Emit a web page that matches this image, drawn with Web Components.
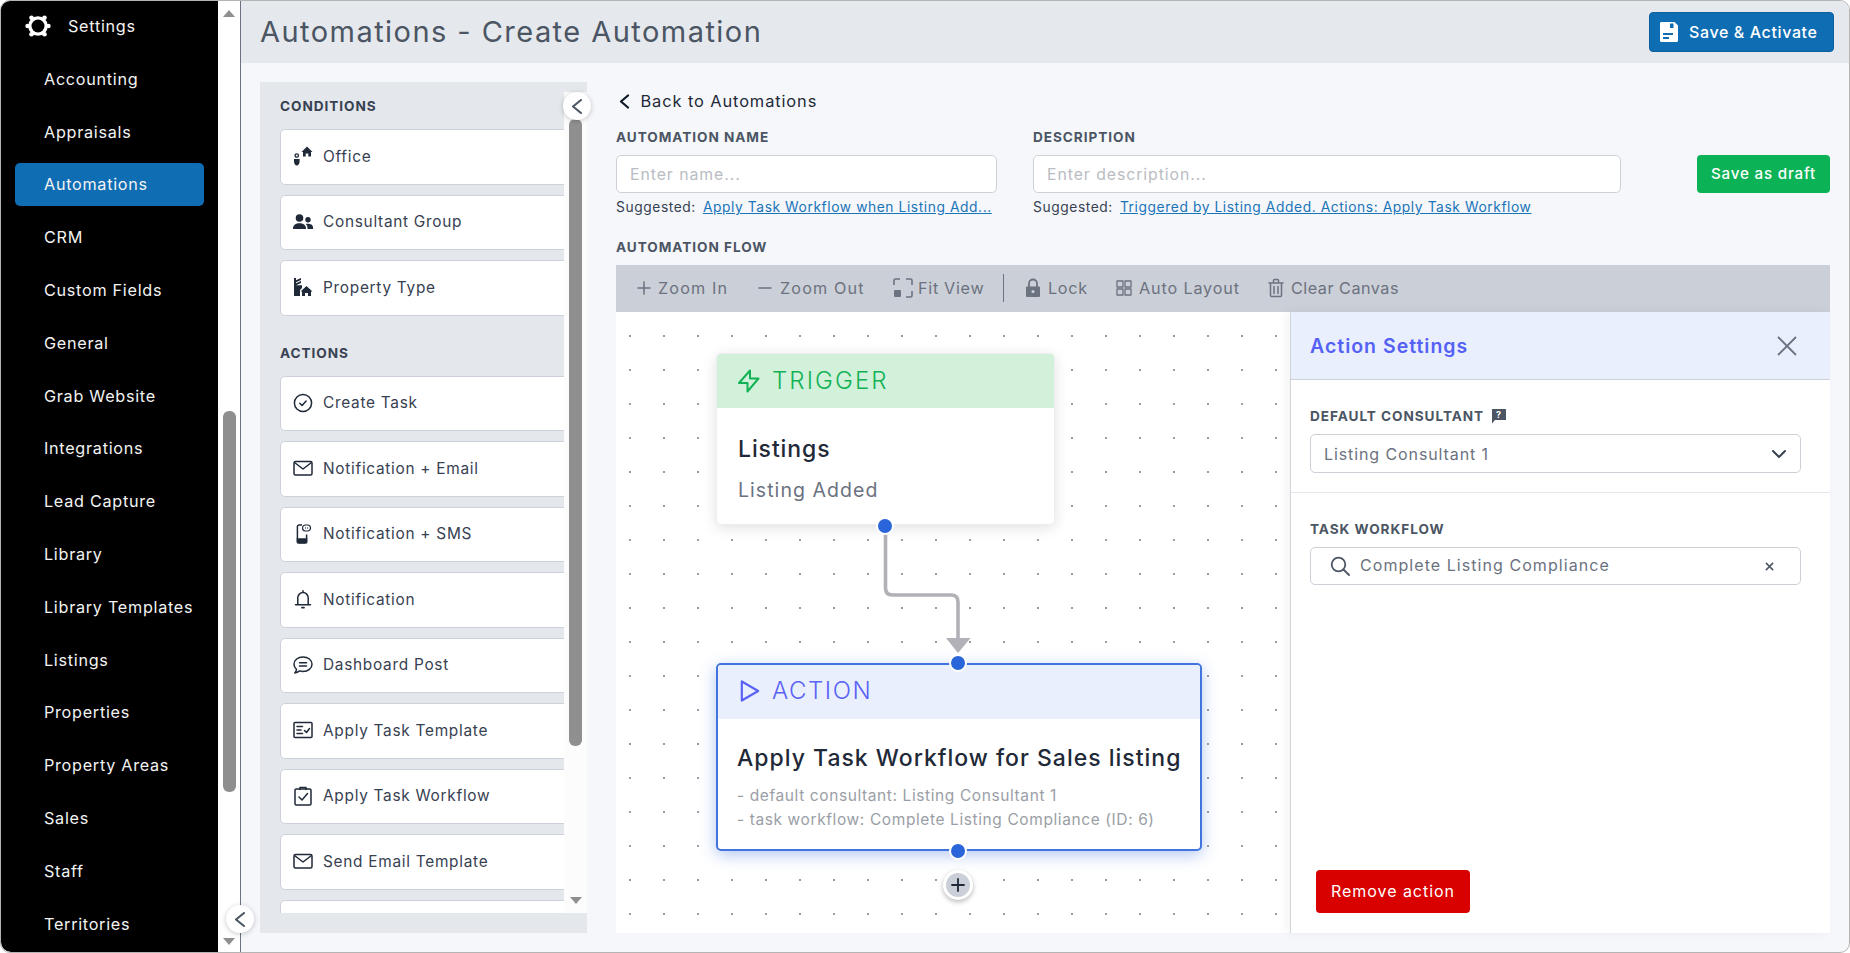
<!DOCTYPE html>
<html><head><meta charset="utf-8"><title>Automations</title>
<style>
html,body{margin:0;padding:0;height:953px;overflow:hidden;background:#fff;font-family:Inter,"Liberation Sans",sans-serif}
</style></head><body>
<app-shell>
  <side-nav slot="nav">
    <nav-head>Settings</nav-head>
    <nav-item>Accounting</nav-item><nav-item>Appraisals</nav-item><nav-item active>Automations</nav-item>
    <nav-item>CRM</nav-item><nav-item>Custom Fields</nav-item><nav-item>General</nav-item>
    <nav-item>Grab Website</nav-item><nav-item>Integrations</nav-item><nav-item>Lead Capture</nav-item>
    <nav-item>Library</nav-item><nav-item>Library Templates</nav-item><nav-item>Listings</nav-item>
    <nav-item>Properties</nav-item><nav-item>Property Areas</nav-item><nav-item>Sales</nav-item>
    <nav-item>Staff</nav-item><nav-item>Territories</nav-item>
  </side-nav>
  <page-header slot="header">Automations - Create Automation</page-header>
  <block-panel slot="panel">
    <block-heading>CONDITIONS</block-heading>
    <block-card><svg slot="icon" viewBox="0 0 20 20" width="20" height="20" fill="#1f2937"><path d="M8.500 6 14 .5l5.500 5.500H18v4.500h-2.700V7.500h-2.600v3H10V6z"/><circle cx="3.800" cy="9.500" r="1.700" fill="none" stroke="#1f2937" stroke-width="1.300"/><path d="M1 13h5.600v2.500c0 1.800-1.200 4-2.800 4S1 17.300 1 15.500z"/></svg>Office</block-card>
    <block-card><svg slot="icon" viewBox="0 0 20 20" width="20" height="20" fill="#1f2937"><circle cx="6.500" cy="6" r="3.800"/><path d="M0 16.500c0-3.600 3-5.300 6.500-5.300s6.500 1.700 6.500 5.300v.5H0z"/><circle cx="15" cy="7.800" r="2.700"/><path d="M14.500 11.800c3 0 5.500 1 5.500 3.600V17h-5.500v-1c0-1.700-.6-3-1.800-3.900.5-.2 1.100-.3 1.800-.3z"/></svg>Consultant Group</block-card>
    <block-card><svg slot="icon" viewBox="0 0 20 20" width="20" height="20" fill="#1f2937"><path d="M1 1h2v2.200L8 1v2L3 5.200v1L8 4v2L3 8.200h6V11l-2 2v6H1z"/><path d="M7.500 14.500 13.500 9l6 5.500H18V19h-3v-3h-3v3H9v-4.500z"/></svg>Property Type</block-card>
    <block-heading second>ACTIONS</block-heading>
    <block-card><svg slot="icon" viewBox="0 0 20 20" width="20" height="20" fill="none" stroke="#1f2937" stroke-width="1.500" stroke-linecap="round" stroke-linejoin="round"><circle cx="10" cy="10" r="8.600"/><path d="m6.800 10.300 2.300 2.200 4-4.500"/></svg>Create Task</block-card>
    <block-card><svg slot="icon" viewBox="0 0 20 20" width="20" height="20" fill="none" stroke="#1f2937" stroke-width="1.500" stroke-linejoin="round"><rect x="1" y="3.500" width="18" height="13.500" rx="1.500"/><path d="m1.500 4.500 8.500 6.500 8.500-6.500"/></svg>Notification + Email</block-card>
    <block-card><svg slot="icon" viewBox="0 0 20 20" width="20" height="20" fill="none" stroke="#1f2937" stroke-width="1.500"><path d="M9 1H6a1.600 1.600 0 0 0-1.600 1.600v14.800A1.600 1.600 0 0 0 6 19h6a1.600 1.600 0 0 0 1.600-1.600V10.500"/><path d="M4.500 15h9v3.500h-9z" fill="#1f2937"/><rect x="9.500" y="1" width="8" height="6" rx="3" stroke-width="1.200"/><path d="M12 4h.8M14.300 4h.8" stroke-width="1.300"/></svg>Notification + SMS</block-card>
    <block-card><svg slot="icon" viewBox="0 0 20 20" width="20" height="20" fill="none" stroke="#1f2937" stroke-width="1.500" stroke-linejoin="round" stroke-linecap="round"><path d="M10 1.800V3M4.800 15.500v-6.700a5.200 5.200 0 0 1 10.400 0v6.700M2.500 15.800h15"/><path d="M9 18.600h2" stroke-width="1.800"/></svg>Notification</block-card>
    <block-card><svg slot="icon" viewBox="0 0 20 20" width="20" height="20" fill="none" stroke="#1f2937" stroke-width="1.500" stroke-linecap="round" stroke-linejoin="round"><path d="M10 2c5 0 9 3 9 7.200s-4 7.200-9 7.200c-1.300 0-2.500-.2-3.500-.5-1.200 1-2.700 1.800-4.700 2 .9-1 1.500-2.200 1.700-3.500C2 13 1 11.200 1 9.200 1 5 5 2 10 2z"/><path d="M6.500 7.800h7M6.500 11h7"/></svg>Dashboard Post</block-card>
    <block-card><svg slot="icon" viewBox="0 0 20 20" width="20" height="20" fill="none" stroke="#1f2937" stroke-width="1.500" stroke-linecap="round" stroke-linejoin="round"><rect x="1" y="2.500" width="18" height="15" rx="1"/><path d="M4 6.500h5.500M4 10h4M4 13.500h5.500M11.500 10.500l2 2 3-4"/></svg>Apply Task Template</block-card>
    <block-card><svg slot="icon" viewBox="0 0 20 20" width="20" height="20" fill="none" stroke="#1f2937" stroke-width="1.500" stroke-linecap="round" stroke-linejoin="round"><rect x="2" y="3" width="16" height="16" rx="1.200"/><path d="M7 3.500V1.500h6v2"/><path d="m6 11 3 3 5.500-6.500"/></svg>Apply Task Workflow</block-card>
    <block-card><svg slot="icon" viewBox="0 0 20 20" width="20" height="20" fill="none" stroke="#1f2937" stroke-width="1.500" stroke-linejoin="round"><rect x="1" y="3.500" width="18" height="13.500" rx="1.500"/><path d="m1.500 4.500 8.500 6.500 8.500-6.500"/></svg>Send Email Template</block-card>
    <block-card></block-card>
  </block-panel>
  <back-link slot="back">Back to Automations</back-link>
  <form-field slot="name" label="AUTOMATION NAME" placeholder="Enter name..." link="Apply Task Workflow when Listing Add..." style="width:381px"></form-field>
  <form-field slot="desc" label="DESCRIPTION" placeholder="Enter description..." link="Triggered by Listing Added. Actions: Apply Task Workflow" style="width:588px"></form-field>
  <draft-button slot="draft">Save as draft</draft-button>
  <flow-label slot="flowlabel">AUTOMATION FLOW</flow-label>
  <flow-toolbar slot="toolbar"></flow-toolbar>
  <flow-canvas slot="canvas"></flow-canvas>
  <settings-panel slot="settings"></settings-panel>
</app-shell>
<script>
const F='font-family:Inter,"Liberation Sans",sans-serif;';
function def(name,html){
  customElements.define(name,class extends HTMLElement{
    connectedCallback(){
      if(this.shadowRoot)return;
      const r=this.attachShadow({mode:'open'});
      r.innerHTML=typeof html==='function'?html(this):html;
    }
  });
}
const chevron=`<svg viewBox="0 0 14 19" width="14" height="19" fill="none" stroke="#4b5563" stroke-width="2.100" stroke-linecap="round" stroke-linejoin="round"><path d="M11 3 3 9.500 11 16"/></svg>`;
def('app-shell',`<style>
:host{display:block;width:1850px;height:953px;box-sizing:border-box;border:1px solid #b4b4b4;border-radius:10px;overflow:hidden;position:relative;background:#f5f7fb;${F}}
.root{display:grid;grid-template-columns:217px 22px 1px 1fr;height:100%}
.nav{background:#000;overflow:hidden;border-radius:0 0 0 10px}
.rail{background:#fff;display:flex;flex-direction:column;align-items:center;position:relative}
.line{background:#6b7280}
.tri{width:0;height:0;border-left:6px solid transparent;border-right:6px solid transparent}
.up{border-bottom:7px solid #8f8f8f;margin-top:9px}
.down{border-top:7px solid #8f8f8f;margin-bottom:7px}
.thumb{width:13px;height:381px;background:#8f8f8f;margin-top:394px;border-radius:6px}
.sp{flex:1}
.collapse{position:absolute;left:8px;top:904px}
.main{display:grid;grid-template-rows:62px 1fr;min-width:0}
.body{display:grid;grid-template-columns:327px 1fr;gap:29px;padding:19px 19px 19px 19px;min-height:0}
.col{display:flex;flex-direction:column;min-width:0;min-height:0}
.row{display:flex;gap:36px;margin-top:7px;height:90px;margin-bottom:20px}
.draft{margin-left:auto;padding-top:28px}
.work{flex:1;display:flex;min-height:0}
.cv{flex:1;min-width:0;position:relative}
</style>
<div class="root">
<div class="nav"><slot name="nav"></slot></div>
<div class="rail"><div class="tri up"></div><div class="thumb"></div><div class="sp"></div><div class="tri down"></div><round-btn class="collapse"></round-btn></div>
<div class="line"></div>
<div class="main"><slot name="header"></slot>
<div class="body"><slot name="panel"></slot>
<div class="col"><slot name="back"></slot>
<div class="row"><slot name="name"></slot><slot name="desc"></slot><div class="draft"><slot name="draft"></slot></div></div>
<slot name="flowlabel"></slot><slot name="toolbar"></slot>
<div class="work"><div class="cv"><slot name="canvas"></slot></div><slot name="settings"></slot></div>
</div></div></div></div>`);
def('round-btn',`<style>:host{display:flex;width:28px;height:28px;border-radius:50%;background:#fff;box-shadow:0 1px 5px rgba(0,0,0,.22);align-items:center;justify-content:center;z-index:5}</style>${chevron}`);
def('side-nav',`<style>:host{display:block;color:#f3f3f3;font-size:16.200px;letter-spacing:.72px}</style><slot></slot>`);
def('nav-head',`<style>:host{display:flex;align-items:center;height:52px;padding:0 0 2px 24px;gap:17px;box-sizing:border-box}</style>
<svg viewBox="0 0 26 26" width="26" height="26"><g fill="#fff"><circle cx="13" cy="13" r="9.800"/><circle cx="6.500" cy="4.800" r="2.300"/><circle cx="19.500" cy="4.800" r="2.300"/><circle cx="6.500" cy="21.200" r="2.300"/><circle cx="19.500" cy="21.200" r="2.300"/><circle cx="2.600" cy="13" r="2.300"/><circle cx="23.400" cy="13" r="2.300"/></g><circle cx="13" cy="13" r="6.500" fill="#000"/></svg><slot></slot>`);
def('nav-item',`<style>:host{display:flex;align-items:center;height:52.800px;box-sizing:border-box;padding:0 0 1px 43px}
:host([active]){margin:4px 14px 5.800px 14px;height:43px;padding-left:29px;background:#0f6db3;border-radius:5px}</style><slot></slot>`);
def('page-header',`<style>:host{display:flex;align-items:center;justify-content:space-between;background:#e5e8ec;padding:0 15px 0 19px;color:#4b5563;font-size:29px;letter-spacing:1.450px}
.t{padding-bottom:2px}
button{all:unset;box-sizing:border-box;display:flex;align-items:center;gap:10px;width:185px;height:40px;padding-left:9px;background:#0f6db3;border:1px solid #0c5f9e;border-radius:4px;color:#fff;font-size:16px;letter-spacing:.62px;font-weight:500;${F}}</style>
<span class="t"><slot></slot></span><button><svg viewBox="0 0 20 22" width="20" height="22"><path fill="#fff" d="M2 1h13.500L19 4.500V19.500a1.500 1.500 0 0 1-1.500 1.500h-15A1.500 1.500 0 0 1 1 19.500V2.500A1.500 1.500 0 0 1 2 1z"/><rect x="11" y="2.500" width="3.500" height="4.500" fill="#0f6db3"/><path d="M4 13h10M4 17h6" stroke="#0f6db3" stroke-width="1.800"/></svg><span>Save &amp; Activate</span></button>`);
def('block-panel',`<style>:host{display:grid;grid-template-columns:304px 23px;background:#e4e7ec;padding-bottom:20px;position:relative;height:851px;box-sizing:border-box}
.scroll{overflow:hidden;padding:14px 0 0 20px;box-sizing:border-box;height:831px}
.track{margin-top:10px;background:#fcfcfc;display:flex;flex-direction:column;align-items:center;height:821px;position:relative}
.thumb{width:13px;height:627px;background:#8f8f8f;border-radius:6px;margin-top:27px}
.sp{flex:1}.down{width:0;height:0;border-left:6px solid transparent;border-right:6px solid transparent;border-top:7px solid #8f8f8f;margin-bottom:9px}
round-btn{position:absolute;left:303px;top:10px}
</style><div class="scroll"><slot></slot></div><div class="track"><div class="thumb"></div><div class="sp"></div><div class="down"></div></div><round-btn></round-btn>`);
def('block-heading',`<style>:host{display:block;height:20px;line-height:20px;font-size:13.600px;font-weight:700;color:#374151;letter-spacing:.95px;margin-bottom:13px}:host([second]){margin-top:27px}</style><slot></slot>`);
def('block-card',`<style>:host{display:flex;align-items:center;gap:10px;width:320px;height:55.500px;margin-bottom:10px;box-sizing:border-box;padding:0 0 1px 12px;background:#fff;border:1px solid #cdd1da;border-radius:5px;font-size:15.400px;letter-spacing:.72px;color:#374151}</style><slot name="icon"></slot><slot></slot>`);
def('back-link',`<style>:host{display:flex;align-items:center;gap:10.500px;height:38px;padding-left:3px;font-size:16.400px;letter-spacing:.9px;color:#1f2937}</style><svg viewBox="0 0 11 15" width="11" height="15" fill="none" stroke="#111827" stroke-width="2.200" stroke-linecap="round" stroke-linejoin="round"><path d="M9 1.500 2 7.500l7 6"/></svg><slot></slot>`);
def('form-field',t=>`<style>:host{display:block}
.l{height:20px;line-height:20px;font-size:13.600px;font-weight:700;letter-spacing:.95px;color:#4b5563}
.i{height:38px;box-sizing:border-box;margin-top:8px;border:1px solid #ccd0d7;border-radius:5px;background:#fff;padding-left:13px;display:flex;align-items:center;font-size:15.800px;letter-spacing:.95px;color:#b9bcc2}
.s{display:flex;margin-top:6px;font-size:13.800px;letter-spacing:.58px;color:#374151;line-height:17px;white-space:nowrap}
.a{margin-left:7px;color:#1a74b8;text-decoration:underline}
</style><div class="l">${t.getAttribute('label')}</div><div class="i">${t.getAttribute('placeholder')}</div><div class="s"><span>Suggested:</span><span class="a">${t.getAttribute('link')}</span></div>`);
def('draft-button',`<style>:host{display:flex;align-items:center;justify-content:center;width:133px;height:38px;box-sizing:border-box;padding-bottom:2px;background:#0cb356;border-radius:4px;color:#fff;font-size:15.200px;letter-spacing:.8px;font-weight:500}</style><slot></slot>`);
def('flow-label',`<style>:host{display:block;height:20px;line-height:20px;font-size:13.600px;font-weight:700;letter-spacing:.95px;color:#4b5563;margin-bottom:8px}</style><slot></slot>`);
const S='fill="none" stroke="#6b7280" stroke-linecap="round" stroke-linejoin="round"';
def('flow-toolbar',`<style>:host{display:flex;align-items:center;height:47px;box-sizing:border-box;padding:0 0 1px 20px;background:#cbcfd7;font-size:16.200px;letter-spacing:.7px;color:#6b7280;white-space:nowrap}
.b{display:flex;align-items:center;gap:7px;flex:none}.sep{width:1px;height:28px;background:#6b7280;flex:none}.z{letter-spacing:1.150px}</style>
<div class="b" style="width:121px;gap:6px"><svg viewBox="0 0 16 16" width="16" height="16" ${S} stroke-width="1.500"><path d="M8 2v12M2 8h12"/></svg><span class="z">Zoom In</span></div>
<div class="b" style="width:136px"><svg viewBox="0 0 16 16" width="16" height="16" ${S} stroke-width="1.500"><path d="M2 8h12"/></svg><span class="z">Zoom Out</span></div>
<div class="b" style="width:110px;gap:5px"><svg viewBox="0 0 20 20" width="20" height="20" fill="#6b7280"><path d="M1 7V2.500A1.500 1.500 0 0 1 2.500 1H7M13 1h4.500A1.500 1.500 0 0 1 19 2.500V7M19 13v4.500a1.500 1.500 0 0 1-1.500 1.500H13" fill="none" stroke="#6b7280" stroke-width="1.600"/><rect x="1" y="12" width="7" height="7" rx="1"/></svg>Fit View</div>
<div class="sep" style="margin-right:21px"></div>
<div class="b" style="width:91px"><svg viewBox="0 0 16 20" width="16" height="20"><path d="M4 9V5.500a4 4 0 0 1 8 0V9" fill="none" stroke="#6b7280" stroke-width="1.800"/><path fill="#6b7280" fill-rule="evenodd" d="M2 8.500h12a1 1 0 0 1 1 1V18a1 1 0 0 1-1 1H2a1 1 0 0 1-1-1V9.500a1 1 0 0 1 1-1zM8 12a1.600 1.600 0 1 0 0 3.200A1.600 1.600 0 0 0 8 12z"/></svg>Lock</div>
<div class="b" style="width:152px"><svg viewBox="0 0 16 16" width="16" height="16" ${S} stroke-width="1.300"><rect x="1" y="1" width="6" height="6"/><rect x="9" y="1" width="6" height="6"/><rect x="1" y="9" width="6" height="6"/><rect x="9" y="9" width="6" height="6"/></svg><span style="letter-spacing:.85px">Auto Layout</span></div>
<div class="b"><svg viewBox="0 0 16 20" width="16" height="20" ${S} stroke-width="1.500"><path d="M1 5h14M5.500 5V2.500a1 1 0 0 1 1-1h3a1 1 0 0 1 1 1V5M2.500 5v12.500a1 1 0 0 0 1 1h9a1 1 0 0 0 1-1V5M6 8.500v7M10 8.500v7"/></svg><span style="letter-spacing:.5px">Clear Canvas</span></div>`);
def('flow-canvas',`<style>:host{display:block;position:absolute;inset:0;overflow:hidden;background-color:#fff;background-image:radial-gradient(circle at 17px 17px,#9b9ba1 0,#9b9ba1 .9px,transparent 1.300px);background-size:34px 34px;background-position:-3px 7px}
svg{position:absolute;left:0;top:0}
flow-node{position:absolute}
.h{position:absolute;width:14px;height:14px;border-radius:50%;background:#2a66d9;border:2.500px solid #fff;margin:-9.500px 0 0 -9.500px;z-index:3}
.plus{position:absolute;left:342px;top:573px;margin:-15px 0 0 -15px;width:24px;height:24px;padding:0;border:3px solid #fff;border-radius:50%;background:#cbcfd7;box-shadow:0 2px 5px rgba(0,0,0,.28);display:flex;align-items:center;justify-content:center;z-index:3}
</style>
<svg width="674" height="621"><path d="M269.500 215V276Q269.500 283 276.500 283H335Q342 283 342 290V328" fill="none" stroke="#b1b1b7" stroke-width="3.600"/><path d="M330 326H354.500L342 341z" fill="#b1b1b7"/></svg>
<flow-node kind="trigger" title="Listings" style="left:100px;top:41px;width:339px;height:172px"><span>Listing Added</span></flow-node>
<flow-node kind="action" title="Apply Task Workflow for Sales listing" style="left:100px;top:351px;width:486px;height:188px"><span>- default consultant: Listing Consultant 1</span><br><span>- task workflow: Complete Listing Compliance (ID: 6)</span></flow-node>
<div class="h" style="left:269.500px;top:214px"></div><div class="h" style="left:342px;top:351px"></div><div class="h" style="left:342px;top:539px"></div>
<div class="plus"><svg style="position:static" viewBox="0 0 16 16" width="16" height="16"><path d="M8 2v12M2 8h12" stroke="#1f2937" stroke-width="1.800" stroke-linecap="round"/></svg></div>`);
def('flow-node',t=>{const a=t.getAttribute('kind')==='action';
 const col=a?'#5a62f6':'#12b254';
 const ic=a?`<svg viewBox="0 0 22 26" width="20" height="24" fill="none" stroke="${col}" stroke-width="2.400" stroke-linejoin="round"><path d="M2 2.500 20 13 2 23.500z"/></svg>`:`<svg viewBox="0 0 24 24" width="24" height="24" fill="none" stroke="${col}" stroke-width="2" stroke-linejoin="round" stroke-linecap="round"><path d="M13 1.500v8h8.500L10.500 22.500v-8.500H2z"/></svg>`;
 return `<style>:host{display:block;box-sizing:border-box;background:#fff;border-radius:5px;${a?'border:2px solid #4274dd;box-shadow:0 4px 16px rgba(66,116,221,.4);':'border:1px solid #eceef1;box-shadow:0 3px 14px rgba(0,0,0,.12);'}overflow:hidden}
.hd{height:54px;box-sizing:border-box;padding-bottom:${a?3:1}px;background:${a?'#e9effc':'#d1f1da'};display:flex;align-items:center;gap:${a?12:11}px;padding-left:${a?22:20}px;color:${col};font-size:24px;font-weight:300;letter-spacing:${a?1.55:2.1}px}
.hd svg{flex:none}
.bd{padding:26px ${a?19:21}px 0}
.t{font-size:23px;line-height:${a?26:30}px;color:#1f2937;font-weight:450;letter-spacing:${a?'1':'.9'}px;white-space:nowrap}
.d{margin-top:${a?13:11}px;font-size:${a?15.500:19.500}px;line-height:${a?24:30}px;color:${a?'#9a9ea6':'#6b7280'};letter-spacing:${a?'.6':'1.05'}px;white-space:nowrap}
</style><div class="hd">${ic}${a?'ACTION':'TRIGGER'}</div><div class="bd"><div class="t">${t.getAttribute('title')}</div><div class="d"><slot></slot></div></div>`});
def('settings-panel',`<style>:host{display:flex;flex-direction:column;width:540px;box-sizing:border-box;background:#fff;border-left:1px solid #d0d4db;box-shadow:-4px 0 10px rgba(0,0,0,.05);position:relative;z-index:2}
.hd{height:68px;box-sizing:border-box;padding:1px 33px 0 19px;background:#e9effc;border-bottom:1px solid #cdd1da;display:flex;align-items:center;justify-content:space-between;color:#5561f5;font-size:19.500px;font-weight:600;letter-spacing:1px}
.sec{padding:26px 29px 19px 19px}.sec+.sec{border-top:1px solid #e5e7eb;padding-top:26px}
.l{display:flex;align-items:center;gap:8px;height:20px;font-size:13.600px;font-weight:700;letter-spacing:.95px;color:#4b5563}
.i{margin-top:8px;height:39px;box-sizing:border-box;border:1px solid #ccd0d7;border-radius:5px;display:flex;align-items:center;padding:0 13px;font-size:16px;letter-spacing:.9px;color:#6b7280;justify-content:space-between}
.left{display:flex;align-items:center;gap:10px}
.left span{padding-bottom:2px;letter-spacing:1.060px}
.sp{flex:1}
.rm{align-self:flex-start;margin:0 0 20px 25px;width:154px;height:43px;box-sizing:border-box;padding-bottom:2px;border-radius:4px;background:#d90000;color:#fff;display:flex;align-items:center;justify-content:center;font-size:16px;letter-spacing:.95px;font-weight:400}
</style>
<div class="hd"><span>Action Settings</span><svg viewBox="0 0 20 20" width="20" height="20"><path d="M1 1l18 18M19 1 1 19" stroke="#6b7280" stroke-width="1.800"/></svg></div>
<div class="sec"><div class="l">DEFAULT CONSULTANT <svg viewBox="0 0 14 15" width="14" height="15"><path fill="#4b5563" d="M0 0h14v11H3l-3 3.500z"/><text x="7" y="8.800" font-size="9" font-weight="700" text-anchor="middle" fill="#fff" font-family="Inter">?</text></svg></div>
<div class="i"><span>Listing Consultant 1</span><svg viewBox="0 0 16 10" width="16" height="10" fill="none" stroke="#374151" stroke-width="2" stroke-linecap="round" stroke-linejoin="round"><path d="M2 2l6 6 6-6"/></svg></div></div>
<div class="sec"><div class="l">TASK WORKFLOW</div>
<div class="i" style="padding:0 26px 0 19px;height:38px"><span class="left"><svg viewBox="0 0 20 20" width="20" height="20" fill="none" stroke="#4b5563" stroke-width="1.800" stroke-linecap="round"><circle cx="8.500" cy="8.500" r="6.800"/><path d="m13.500 13.500 5.500 5.500"/></svg><span>Complete Listing Compliance</span></span><svg viewBox="0 0 10 10" width="9" height="9"><path d="M1 1l8 8M9 1 1 9" stroke="#4b5563" stroke-width="1.700"/></svg></div></div>
<div class="sp"></div><div class="rm">Remove action</div>`);
</script>
</body></html>
